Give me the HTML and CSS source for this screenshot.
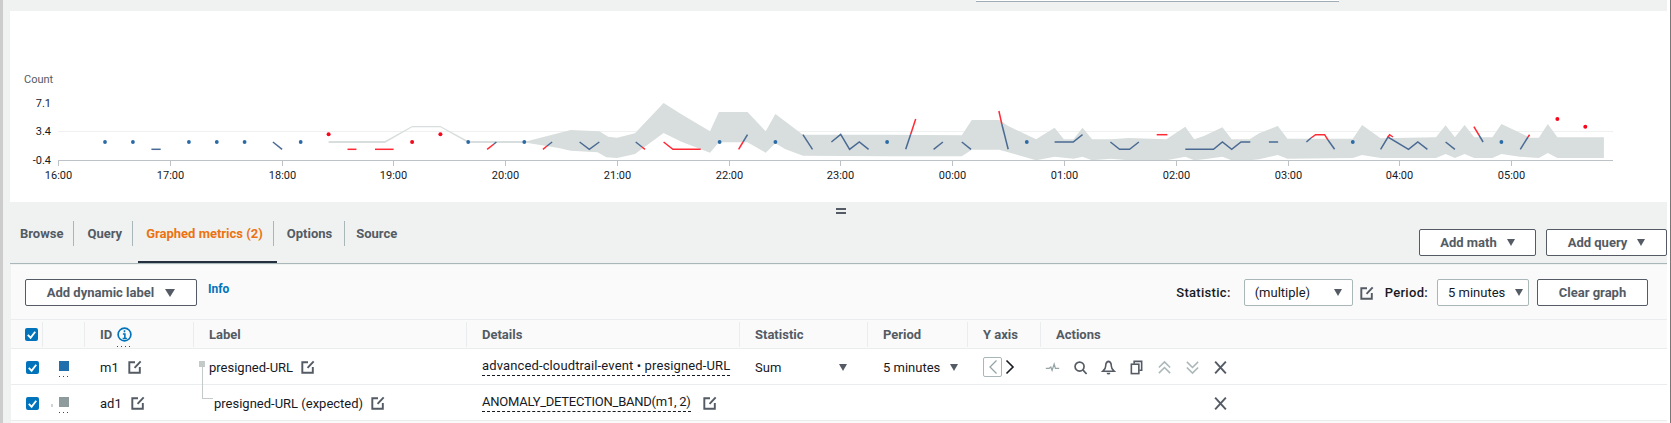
FILE: index.html
```html
<!DOCTYPE html>
<html lang="en">
<head>
    <meta charset="UTF-8">
    <title>Graphed metrics</title>
    <link rel="stylesheet" href="styles.css">
</head>
<body>
    <!-- Shared icons -->
    <svg class="sprite" aria-hidden="true">
        <symbol id="i-edit" viewBox="0 0 16 16">
            <path d="M8 2.500H1.500V14.500H13.500V8M14.500 1.500L7.500 9" fill="none" stroke="currentColor" stroke-width="2.200"/>
        </symbol>
        <symbol id="i-check" viewBox="0 0 14 14">
            <path d="M3 7.500L6 10.500 11 4" fill="none" stroke="#fff" stroke-width="2"/>
        </symbol>
        <symbol id="i-close" viewBox="0 0 14 14">
            <path d="M2 1.500L12 12.500M12 1.500L2 12.500" fill="none" stroke="currentColor" stroke-width="1.800"/>
        </symbol>
    </svg>

    <div class="page">
        <div class="top-strip"><div class="range-box"></div></div>

        <!-- Chart -->
        <section class="chart">
            <svg class="plot" width="1657" height="191" viewBox="10 11 1657 191">
                <line class="grid" x1="58" y1="131.500" x2="1613" y2="131.500"/>
                <polygon class="band" points="328.600,141 385,141 412.100,126 440.400,126 468.200,141 527.900,141 560,132.700 570.700,130 599.300,131.300 608.200,136.700 617.100,137.700 635,133.300 663.600,103 681.400,114.300 710,131.300 718.900,112 747.500,112 765.700,131.300 775.400,114 802.900,134.700 886.800,134.700 961.800,135.300 971.800,120 999.300,120 1008.200,126 1036.100,139.300 1054.600,127.700 1063.900,139.300 1073.600,139.300 1082.500,127.700 1092.100,139.300 1111,139.300 1128.900,138 1166.400,139.300 1185.300,126.700 1194.200,139.300 1203.900,136 1222.400,127.300 1231.700,139.300 1249.600,139.300 1259.200,133.300 1277.800,126 1287.400,138.700 1352.800,138.700 1362.100,125 1380.600,138.300 1436,137.300 1445.600,125.300 1454.900,137.300 1464.600,125 1474.200,137.300 1492.400,137.300 1501.400,124 1519.900,132.700 1529.600,137.700 1538.900,137.700 1547.800,124 1557.400,137.300 1603.900,137.300 1603.900,158 1557.400,158 1547.800,153 1538.900,158 1519.900,156.700 1501.400,154 1492.400,158 1474.200,158 1464.600,154 1454.900,158 1445.600,154 1436,158 1380.600,158 1362.100,155 1352.800,158 1287.400,158.700 1277.800,155 1259.200,159.300 1249.600,160.300 1231.700,160.300 1222.400,156.700 1203.900,159.300 1194.200,160.300 1185.300,156.700 1166.400,160.300 1128.900,160.300 1111,158.700 1092.100,160.300 1082.500,156.700 1073.600,158.700 1054.600,156.700 1036.100,160.300 999.300,149.700 971.800,149.700 961.800,156.300 886.800,156.300 802.900,155.700 785,149 775.400,143.300 765.700,152.700 747.500,142.300 718.900,142.300 710,152.700 681.400,141.700 663.600,133 635,154 617.100,158 606.400,157.300 597.500,152.300 570.700,150.700 560,148.300 527.900,143 468.200,143 440.400,127.300 412.100,127.300 385,143 328.600,143"/>

                <!-- Axis -->
                <path class="axis" d="M58 160.500H1613M58.500 160v6M170.500 160v6M282.500 160v6M393.500 160v6M505.500 160v6M617.500 160v6M729.500 160v6M840.500 160v6M952.500 160v6M1064.500 160v6M1176.500 160v6M1288.500 160v6M1399.500 160v6M1511.500 160v6"/>
                <text class="label" x="24" y="83">Count</text>
                <text class="label end" x="51" y="107">7.1</text>
                <text class="label end" x="51" y="135">3.4</text>
                <text class="label end" x="51" y="164">-0.4</text>
                <g class="hours">
                    <text x="58.500" y="179">16:00</text>
                    <text x="170.500" y="179">17:00</text>
                    <text x="282.500" y="179">18:00</text>
                    <text x="393.500" y="179">19:00</text>
                    <text x="505.500" y="179">20:00</text>
                    <text x="617.500" y="179">21:00</text>
                    <text x="729.500" y="179">22:00</text>
                    <text x="840.500" y="179">23:00</text>
                    <text x="952.500" y="179">00:00</text>
                    <text x="1064.500" y="179">01:00</text>
                    <text x="1176.500" y="179">02:00</text>
                    <text x="1288.500" y="179">03:00</text>
                    <text x="1399.500" y="179">04:00</text>
                    <text x="1511.500" y="179">05:00</text>
                </g>

                <!-- Metric m1, in band -->
                <g class="metric">
                    <polyline points="151.400,149.300 160.700,149.300"/>
                    <polyline points="272.900,142 282.100,149.300"/>
                    <polyline points="579.600,142 589.300,149.300 599.300,142"/>
                    <polyline points="635.700,142 642,147"/>
                    <polyline points="743,142 747.500,134.700"/>
                    <polyline points="802.900,134.700 812.500,149.300"/>
                    <polyline points="831.400,142 840.700,134.300 849.600,149.300 859.300,142 868.600,149.300"/>
                    <polyline points="905.700,149.300 910.700,134.300"/>
                    <polyline points="933.600,149.300 942.900,142"/>
                    <polyline points="961.800,142 971,149.300"/>
                    <polyline points="1001.800,124 1008.200,149.300"/>
                    <polyline points="1054.600,142 1073.200,142 1082.500,134.700"/>
                    <polyline points="1110.400,142 1119.600,149.300 1129.600,149.300 1138.900,142"/>
                    <polyline points="1185.300,149.300 1213.500,149.300 1222.400,142 1231.700,149.300 1241,142 1250.300,142"/>
                    <polyline points="1268.900,142 1278.100,142"/>
                    <polyline points="1306.400,142 1311,138"/>
                    <polyline points="1328,140 1334.600,149.300"/>
                    <polyline points="1380.600,149.300 1388,137 1408.500,149.300 1417.800,142 1427.400,149.300"/>
                    <polyline points="1445.600,142 1454.900,149.300"/>
                    <polyline points="1478.900,135 1483.100,142"/>
                    <polyline points="1520.300,149.300 1528,137"/>
                </g>

                <!-- Outside the band -->
                <g class="anomaly">
                    <polyline points="347.500,149.300 356.400,149.300"/>
                    <polyline points="375,149.300 393.600,149.300"/>
                    <polyline points="487.100,149.300 494,144"/>
                    <polyline points="542.900,149.300 547,146"/>
                    <polyline points="642,147 645,149.300"/>
                    <polyline points="663.600,142 672.900,149.300 700.700,149.300"/>
                    <polyline points="738.600,149.300 743,142"/>
                    <polyline points="910.700,134.300 915.700,119"/>
                    <polyline points="998.900,111 1001.800,124"/>
                    <polyline points="1156.700,134.700 1167.400,134.700"/>
                    <polyline points="1311,138 1315.600,134.700 1324.600,134.700 1328,140"/>
                    <polyline points="1388,137 1389.600,134.700 1393,137"/>
                    <polyline points="1473.900,126.700 1478.900,135"/>
                    <polyline points="1528,137 1529.600,134.700"/>
                </g>
                <g class="metric">
                    <polyline points="494,144 496.400,142"/>
                    <polyline points="547,146 552.100,142"/>
                </g>
                <g class="dot-blue">
                    <circle cx="105" cy="142" r="1.900"/>
                    <circle cx="132.900" cy="142" r="1.900"/>
                    <circle cx="188.900" cy="142" r="1.900"/>
                    <circle cx="216.800" cy="142" r="1.900"/>
                    <circle cx="244.600" cy="142" r="1.900"/>
                    <circle cx="300.700" cy="142" r="1.900"/>
                    <circle cx="468.200" cy="142" r="1.900"/>
                    <circle cx="524.300" cy="142" r="1.900"/>
                    <circle cx="719.600" cy="142" r="1.900"/>
                    <circle cx="775.400" cy="142" r="1.900"/>
                    <circle cx="887.100" cy="142" r="1.900"/>
                    <circle cx="1026.800" cy="142" r="1.900"/>
                    <circle cx="1352.800" cy="142" r="1.900"/>
                    <circle cx="1501.400" cy="142" r="1.900"/>
                </g>
                <g class="dot-red">
                    <circle cx="328.600" cy="134.300" r="2"/>
                    <circle cx="412.100" cy="142" r="2"/>
                    <circle cx="440.400" cy="134.300" r="2"/>
                    <circle cx="1557.400" cy="119" r="2"/>
                    <circle cx="1585.300" cy="126.700" r="2"/>
                </g>
            </svg>
        </section>

        <div class="drag-handle"><span></span><span></span></div>

        <!-- Tabs -->
        <div class="tab-bar">
            <nav class="tabs">
                <a class="tab"><span>Browse</span></a>
                <a class="tab"><span>Query</span></a>
                <a class="tab active"><span>Graphed metrics (2)</span></a>
                <a class="tab options"><span>Options</span></a>
                <a class="tab last"><span>Source</span></a>
            </nav>
            <div class="tab-actions">
                <button class="btn btn-math">Add math <i class="caret"></i></button>
                <button class="btn btn-query">Add query <i class="caret"></i></button>
            </div>
        </div>

        <section class="panel">
            <div class="toolbar">
                <button class="btn btn-dynamic">Add dynamic label <i class="caret big"></i></button>
                <a class="info-link">Info</a>
                <div class="toolbar-right">
                    <label class="field-label">Statistic:</label>
                    <div class="select select-stat">(multiple) <i class="caret"></i></div>
                    <svg class="icon edit-tool"><use href="#i-edit"/></svg>
                    <label class="field-label period-label">Period:</label>
                    <div class="select select-period">5 minutes <i class="caret"></i></div>
                    <button class="btn btn-clear">Clear graph</button>
                </div>
            </div>

            <!-- Metrics table -->
            <div class="row head">
                <div class="cell"><span class="checkbox"><svg><use href="#i-check"/></svg></span></div>
                <div class="cell"></div>
                <div class="cell id-head">ID
                    <svg class="info-icon" viewBox="0 0 16 16">
                        <circle cx="8" cy="8" r="6.800" fill="none" stroke="#0073bb" stroke-width="1.800"/>
                        <path d="M8 3.500v2.200M6.300 7.500H8.400V12M6 12.200h4.600" fill="none" stroke="#0073bb" stroke-width="1.700"/>
                    </svg>
                </div>
                <div class="cell">Label</div>
                <div class="cell">Details</div>
                <div class="cell">Statistic</div>
                <div class="cell">Period</div>
                <div class="cell">Y axis</div>
                <div class="cell">Actions</div>
            </div>

            <div class="row">
                <div class="cell"><span class="checkbox"><svg><use href="#i-check"/></svg></span></div>
                <div class="cell"><span class="swatch blue"></span></div>
                <div class="cell">m1 <svg class="icon edit-id"><use href="#i-edit"/></svg></div>
                <div class="cell label-cell"><i class="tree-link"></i>presigned-URL <svg class="icon edit-label"><use href="#i-edit"/></svg></div>
                <div class="cell"><span class="dashed details-wide">advanced-cloudtrail-event • presigned-URL</span></div>
                <div class="cell stat-cell">Sum <i class="caret"></i></div>
                <div class="cell stat-cell period-cell">5 minutes <i class="caret"></i></div>
                <div class="cell axis-cell">
                    <span class="axis-left">
                        <svg width="10" height="16" viewBox="0 0 10 16"><path d="M8.500 1.500L2 8l6.500 6.500" fill="none" stroke="#95a5a6" stroke-width="1.300"/></svg>
                    </span>
                    <svg class="axis-right" width="10" height="16" viewBox="0 0 10 16"><path d="M1.500 1.500L8 8l-6.500 6.500" fill="none" stroke="#16191f" stroke-width="1.600"/></svg>
                </div>
                <div class="cell actions">
                    <svg class="act" viewBox="0 0 18 16"><path d="M1 9h4l2-1.500 1.500 4L11 4l1.500 5H17" fill="none" stroke="#95a5a6" stroke-width="1.500"/></svg>
                    <svg class="act" viewBox="0 0 16 16"><circle cx="7" cy="7" r="4.800" fill="none" stroke="#545b64" stroke-width="1.800"/><path d="M10.500 10.500L14.500 15" stroke="#545b64" stroke-width="1.800"/></svg>
                    <svg class="act" viewBox="0 0 16 16"><path d="M8 1.500C5.500 2 5 4 5 6.500 5 9 4 10.500 2 12h12c-2-1.500-3-3-3-5.500C11 4 10.500 2 8 1.500z" fill="none" stroke="#545b64" stroke-width="1.700"/><path d="M6 13.500a2 2 0 0 0 4 0z" fill="#545b64"/></svg>
                    <svg class="act" viewBox="0 0 16 16"><path d="M5.500 4V1.500h8V11H11" fill="none" stroke="#545b64" stroke-width="1.700"/><rect x="2.500" y="4.500" width="8" height="10" fill="none" stroke="#545b64" stroke-width="1.700"/></svg>
                    <svg class="act" viewBox="0 0 16 16"><path d="M2 8l6-6 6 6M2 14l6-6 6 6" fill="none" stroke="#aab7b8" stroke-width="1.600"/></svg>
                    <svg class="act" viewBox="0 0 16 16"><path d="M2 2l6 6 6-6M2 8l6 6 6-6" fill="none" stroke="#aab7b8" stroke-width="1.600"/></svg>
                    <svg class="act close"><use href="#i-close"/></svg>
                </div>
            </div>

            <div class="row">
                <div class="cell"><span class="checkbox"><svg><use href="#i-check"/></svg></span></div>
                <div class="cell"><span class="swatch gray"></span></div>
                <div class="cell">ad1 <svg class="icon edit-id"><use href="#i-edit"/></svg></div>
                <div class="cell child-label">presigned-URL (expected) <svg class="icon edit-label"><use href="#i-edit"/></svg></div>
                <div class="cell"><span class="dashed details-narrow">ANOMALY_DETECTION_BAND(m1, 2)</span> <svg class="icon edit-band"><use href="#i-edit"/></svg></div>
                <div class="cell"></div>
                <div class="cell"></div>
                <div class="cell"></div>
                <div class="cell actions end-close"><svg class="act close"><use href="#i-close"/></svg></div>
            </div>
        </section>
    </div>
</body>
</html>
```

FILE: styles.css
```css
* {
    margin: 0;
    padding: 0;
    box-sizing: border-box;
}

body {
    width: 1671px;
    height: 423px;
    overflow: hidden;
    font-family: Roboto, "Liberation Sans", sans-serif;
    font-size: 13px;
    background-color: #fff;
    color: #16191f;
}

.sprite {
    display: none;
}

.page {
    height: 423px;
    padding-right: 3px;
    border-left: 3px solid #cccccc;
    border-right: 1px solid #777;
    background: linear-gradient(to left, #fff 3px, #f0f2f1 3px);
}

.top-strip {
    height: 11px;
}

.range-box {
    width: 363px;
    height: 2px;
    margin-left: 973px;
    border-bottom: 1px solid #a0acb6;
    background-color: #fff;
}

/* Chart */
.chart {
    height: 191px;
    margin-left: 7px;
    background-color: #fff;
}

.plot {
    display: block;
}

.grid {
    stroke: #eff1f1;
}

.band {
    fill: #d8dedd;
}

.axis {
    fill: none;
    stroke: #bcc2c5;
}

.label {
    font-size: 11px;
    fill: #545b64;
}

.end {
    fill: #16191f;
    text-anchor: end;
}

.hours text {
    font-size: 11px;
    fill: #16191f;
    text-anchor: middle;
}

.metric polyline {
    fill: none;
    stroke: #4a6a94;
    stroke-width: 1.500;
}

.anomaly polyline {
    fill: none;
    stroke: #ff2a35;
    stroke-width: 1.500;
}

.dot-blue circle {
    fill: #2a6aa5;
}

.dot-red circle {
    fill: #f5071c;
}

.drag-handle {
    display: flex;
    flex-direction: column;
    gap: 2px;
    align-items: center;
    height: 15px;
    padding-top: 6px;
    padding-left: 12px;
}

.drag-handle span {
    width: 10px;
    height: 2px;
    background-color: #545b64;
}

/* Tabs */
.tab-bar {
    display: flex;
    justify-content: space-between;
    height: 47px;
    margin-left: 7px;
    border-bottom: 1px solid #aab7b8;
}

.tabs {
    display: flex;
    padding-top: 4px;
}

.tab {
    height: 42px;
    padding-right: 3px;
    font-weight: 700;
    color: #545b64;
}

.tab span {
    display: block;
    height: 25px;
    padding: 0 10px;
    line-height: 26px;
    border-right: 1px solid #aab7b8;
}

.tab.active {
    margin-left: 2px;
    border-bottom: 2px solid #232f3e;
    color: #ec7211;
}

.tab.active span {
    padding-left: 8px;
}

.tab.options span {
    padding-right: 12px;
}

.tab.last span {
    padding-left: 8px;
    border-right: none;
}

.tab-actions {
    display: flex;
    gap: 10px;
    padding-top: 12px;
}

/* Buttons and selects */
.btn {
    display: flex;
    align-items: center;
    justify-content: center;
    height: 27px;
    border: 1px solid #545b64;
    border-radius: 2px;
    background-color: #fff;
    font-family: inherit;
    font-size: 13px;
    font-weight: 700;
    color: #545b64;
}

.btn-math {
    width: 117px;
}

.btn-query {
    width: 121px;
}

.btn-dynamic {
    width: 172px;
}

.btn-clear {
    width: 111px;
    margin-left: 8px;
}

.caret {
    display: inline-block;
    width: 0;
    height: 0;
    margin-left: 10px;
    border-top: 7px solid #545b64;
    border-left: 4px solid transparent;
    border-right: 4px solid transparent;
}

.caret.big {
    margin-left: 11px;
    border-top-width: 8px;
    border-left-width: 5px;
    border-right-width: 5px;
}

.panel {
    margin-top: 1px;
    margin-left: 8px;
    padding-bottom: 2px;
    background-color: #fafafa;
}

.toolbar {
    display: flex;
    align-items: flex-start;
    height: 54px;
    padding: 14px 19px 0 14px;
}

.info-link {
    margin-left: 11px;
    padding-top: 3px;
    font-size: 12px;
    font-weight: 700;
    color: #0073bb;
}

.toolbar-right {
    display: flex;
    align-items: center;
    margin-left: auto;
}

.field-label {
    font-weight: 500;
    letter-spacing: 0.3px;
    color: #16191f;
}

.period-label {
    margin-left: 11px;
}

.select {
    display: flex;
    align-items: center;
    justify-content: space-between;
    height: 27px;
    margin-left: 13px;
    padding: 0 10px;
    border: 1px solid #aab7b8;
    border-radius: 2px;
    background-color: #fff;
    white-space: nowrap;
}

.select-stat {
    width: 109px;
}

.select-period {
    width: 92px;
    margin-left: 9px;
    padding-right: 6px;
}

.edit-tool {
    margin-left: 7px;
}

/* Metrics table */
.row {
    display: grid;
    grid-template-columns: 32px 42px 109px 273px 273px 128px 100px 73px 1fr;
    height: 36px;
    border-bottom: 1px solid #eaeded;
    background-color: #fff;
}

.row.head {
    height: 30px;
    border-top: 1px solid #eaeded;
    background-color: #fafafa;
    font-weight: 700;
    color: #545b64;
}

.cell {
    display: flex;
    align-items: center;
    padding-top: 1px;
    padding-left: 15px;
    white-space: nowrap;
}

.head .cell {
    margin: 2px 0 1px;
    padding-top: 0;
    border-right: 1px solid #eaeded;
}

.head .cell:first-child {
    padding-left: 14px;
}

.head .cell:last-child {
    border-right: none;
}

.checkbox {
    display: block;
    flex: none;
    width: 13px;
    height: 13px;
    border-radius: 2px;
    background-color: #0073bb;
}

.checkbox svg {
    display: block;
    width: 13px;
    height: 13px;
}

.swatch {
    position: relative;
    display: block;
    width: 10px;
    height: 10px;
    margin-left: 1px;
    margin-bottom: 3px;
}

/* Small dotted mark under the swatch and the info icon */
.swatch::after,
.id-head::after {
    content: "";
    position: absolute;
    height: 1px;
    background: repeating-linear-gradient(to right, #444 0 1px, transparent 1px 4px);
}

.swatch::after {
    left: 0;
    top: 15px;
    width: 10px;
}

.swatch.blue {
    background-color: #1f6fad;
}

.swatch.gray {
    background-color: #8d9b9c;
}

.swatch.gray::before {
    content: "";
    position: absolute;
    left: -8px;
    top: 7px;
    width: 2px;
    height: 3px;
    background-color: #cfd3d3;
}

.icon {
    display: block;
    flex: none;
    width: 14px;
    height: 14px;
    color: #545b64;
}

.edit-id {
    margin-left: 9px;
}

.edit-label {
    margin-left: 8px;
}

.edit-band {
    margin-left: 12px;
}

.id-head {
    position: relative;
}

.id-head::after {
    left: 32px;
    top: 24px;
    width: 15px;
}

.info-icon {
    width: 15px;
    height: 15px;
    margin-left: 5px;
}

.label-cell {
    position: relative;
}

.tree-link {
    position: absolute;
    left: 8px;
    top: 12px;
    width: 11px;
    height: 38px;
    border-left: 1px solid #c4c9c9;
    border-bottom: 1px solid #c4c9c9;
}

.tree-link::before {
    content: "";
    position: absolute;
    left: -4px;
    top: 0;
    width: 6px;
    height: 6px;
    background-color: #c4c9c9;
}

.child-label {
    padding-left: 20px;
}

.dashed {
    padding-bottom: 2px;
    border-bottom: 1px dashed #16191f;
}

.details-wide {
    letter-spacing: 0.13px;
}

.details-narrow {
    letter-spacing: -0.25px;
}

.stat-cell {
    justify-content: space-between;
    padding-right: 21px;
}

.period-cell {
    padding-right: 10px;
}

.axis-cell {
    gap: 3px;
}

.axis-left {
    display: flex;
    align-items: center;
    justify-content: center;
    width: 19px;
    height: 20px;
    border: 1px solid #aab7b8;
    border-radius: 2px;
}

.actions {
    gap: 13px;
    padding-left: 4px;
}

.act {
    display: block;
    flex: none;
    width: 15px;
    height: 15px;
}

.close {
    color: #545b64;
}

.end-close {
    padding-left: 172px;
}
```
